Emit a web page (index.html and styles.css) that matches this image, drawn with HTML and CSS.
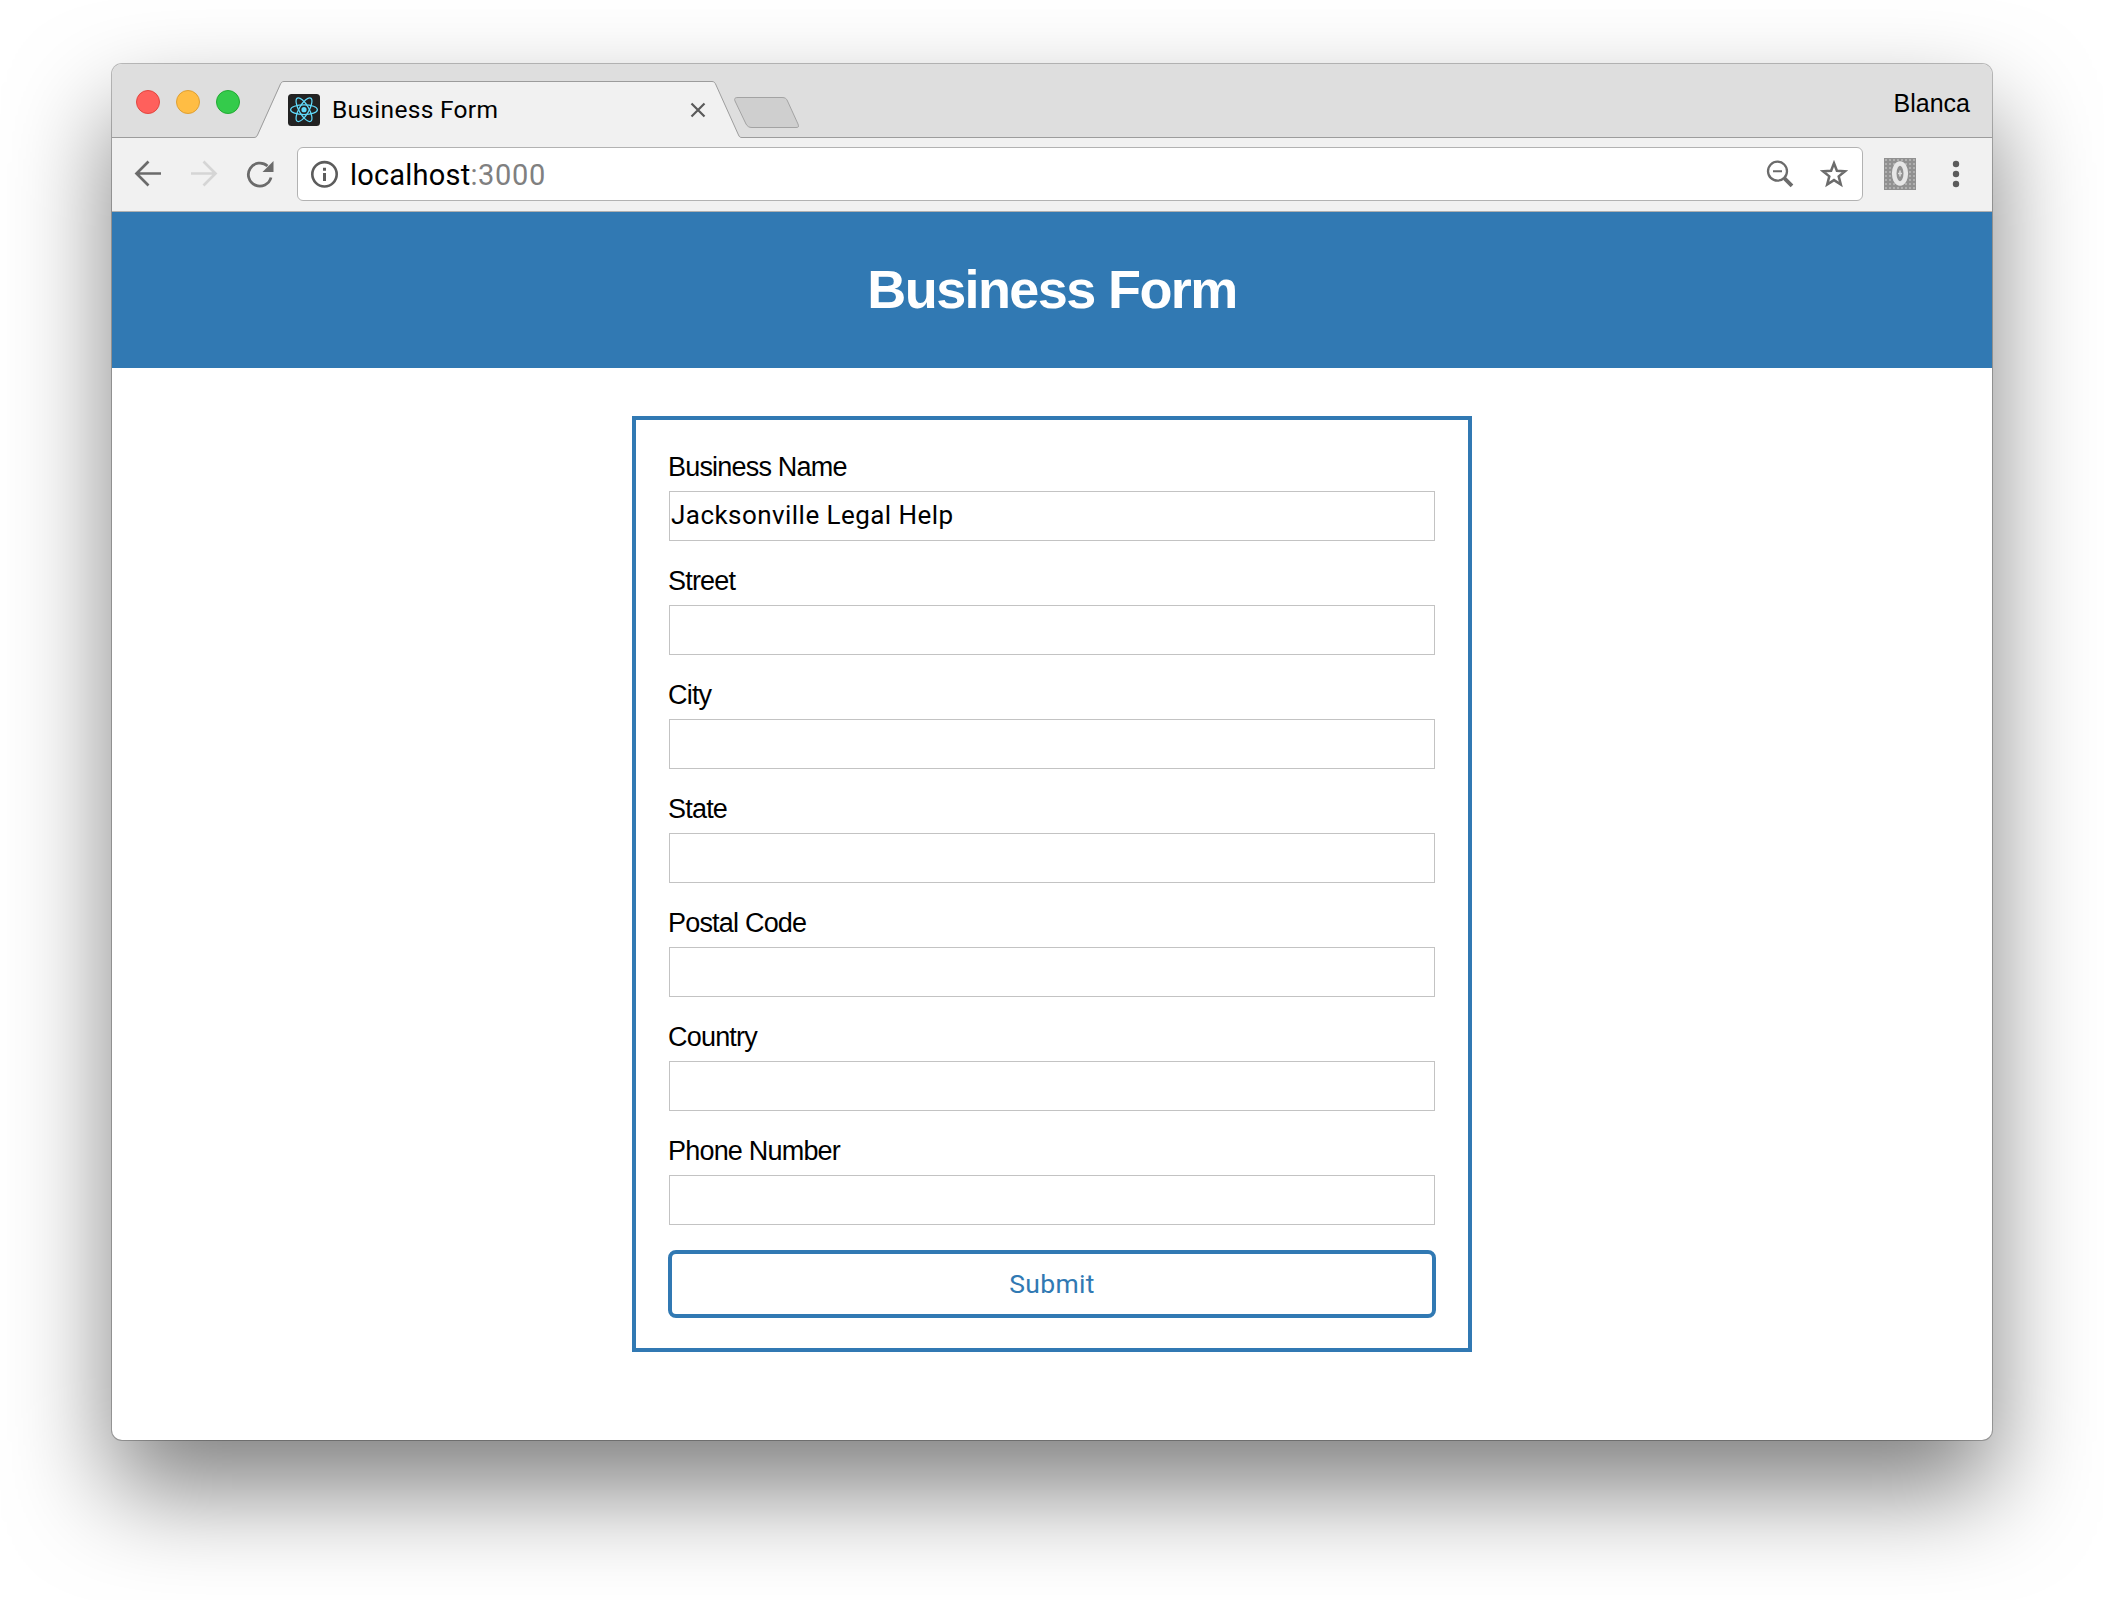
FILE: index.html
```html
<!DOCTYPE html>
<html lang="en">
<head>
<meta charset="utf-8">
<title>Business Form</title>
<link rel="stylesheet" href="styles.css">
</head>
<body>
<div class="window">
  <div class="tab-strip">
    <svg class="strip-shape" width="1880" height="74" viewBox="0 0 1880 74">
      <path d="M143 74C145 74 145 72.500 146 71L168.500 21C169.500 18.500 170 17.500 172 17.500H600C602 17.500 603 18.500 604 21L626.500 71C627 72.500 628 74 630 74Z" fill="#f1f1f1"/>
      <path d="M0 73.500H142C144 73.500 144.500 72.500 145.500 71L168 21C169 18.500 170 17.500 172 17.500H600C602 17.500 603 18.500 604 21L626.500 71C627.500 73 628 73.500 630 73.500H1880" fill="none" stroke="#9c9c9c"/>
      <path d="M626 33.500H670C673 33.500 674.500 34.500 675.500 37L686 60C687 63 686.500 63.500 684 63.500H640C637 63.500 635.500 62.500 634 60L623 37C622 34.500 623 33.500 626 33.500Z" fill="#cfcfcf" stroke="#a3a3a3"/>
    </svg>
    <div class="lights">
      <span class="light red"></span><span class="light amber"></span><span class="light green"></span>
    </div>
    <div class="tab">
      <svg width="32" height="32" viewBox="0 0 32 32">
        <rect width="32" height="32" rx="3.500" fill="#222"/>
        <g transform="translate(16 15.700)" fill="none" stroke="#61dafb" stroke-width="1.250">
          <ellipse rx="13.400" ry="4.900"/>
          <ellipse rx="13.400" ry="4.900" transform="rotate(60)"/>
          <ellipse rx="13.400" ry="4.900" transform="rotate(120)"/>
          <circle r="2.600" fill="#61dafb" stroke="none"/>
        </g>
      </svg>
      <span class="tab-title">Business Form</span>
      <svg class="tab-close" width="16" height="16" viewBox="0 0 16 16"><path d="M1.500 1.500L14.500 14.500M14.500 1.500L1.500 14.500" stroke="#5a5a5a" stroke-width="2.200"/></svg>
    </div>
    <span class="profile">Blanca</span>
  </div>
  <div class="toolbar">
    <svg class="nav" width="28" height="28" viewBox="0 0 28 28" fill="none" stroke="#6b6b6b" stroke-width="2.700"><path d="M27 13.500H3M14.500 1.500L2.500 13.500L14.500 25.500"/></svg>
    <svg class="nav" width="28" height="28" viewBox="0 0 28 28" fill="none" stroke="#d5d5d5" stroke-width="2.700"><path d="M1 13.500H25M13.500 1.500L25.500 13.500L13.500 25.500"/></svg>
    <svg class="nav" width="28" height="28" viewBox="0 0 28 28"><path d="M21.500 6A11.500 11.500 0 1 0 25 17.500" fill="none" stroke="#6b6b6b" stroke-width="2.800"/><path d="M27.500 1V12H16.500Z" fill="#6b6b6b"/></svg>
    <div class="omnibox">
      <svg width="28" height="28" viewBox="0 0 28 28"><circle cx="14.500" cy="14.300" r="12.200" fill="none" stroke="#5c5c5c" stroke-width="2.600"/><path d="M13 7.800H16V10.800H13ZM13 13.100H16V21H13Z" fill="#5c5c5c"/></svg>
      <span class="url">localhost<span class="port">:3000</span></span>
      <svg class="magnifier" width="28" height="28" viewBox="0 0 28 28" fill="none" stroke="#6b6b6b"><circle cx="11.500" cy="11.200" r="9.500" stroke-width="2.300"/><path d="M7 11.200H16" stroke-width="2"/><path d="M18.500 18.300L26 25.800" stroke-width="3.800"/></svg>
      <svg width="30" height="30" viewBox="0 0 30 30"><path d="M15 4.300L17.900 11.800L26 12.300L19.700 17.400L21.800 25.500L15 21.100L8.200 25.500L10.300 17.400L4 12.300L12.100 11.800Z" fill="none" stroke="#6b6b6b" stroke-width="2.500"/></svg>
    </div>
    <svg class="extension" width="32" height="32" viewBox="0 0 32 32">
      <defs><pattern id="weave" width="4" height="4" patternUnits="userSpaceOnUse"><rect width="4" height="4" fill="#919191"/><rect x="1" y="1" width="2" height="2" fill="#b0b0b0"/></pattern></defs>
      <rect width="32" height="32" fill="url(#weave)"/>
      <ellipse cx="16" cy="15.500" rx="5.800" ry="10" fill="#919191" stroke="#e6e6e6" stroke-width="4.600"/>
      <path d="M16 12.500V18.500M14 15.500H18" stroke="#dcdcdc" stroke-width="1.500"/>
    </svg>
    <svg width="8" height="28" viewBox="0 0 8 28" fill="#5c5c5c"><circle cx="4" cy="4" r="3.200"/><circle cx="4" cy="14" r="3.200"/><circle cx="4" cy="24" r="3.200"/></svg>
  </div>
  <header class="banner"><h1>Business Form</h1></header>
  <main class="page">
    <form class="form">
      <label class="field"><span>Business Name</span><input type="text" value="Jacksonville Legal Help"></label>
      <label class="field"><span>Street</span><input type="text"></label>
      <label class="field"><span>City</span><input type="text"></label>
      <label class="field"><span>State</span><input type="text"></label>
      <label class="field"><span>Postal Code</span><input type="text"></label>
      <label class="field"><span>Country</span><input type="text"></label>
      <label class="field"><span>Phone Number</span><input type="text"></label>
      <button class="submit" type="button">Submit</button>
    </form>
  </main>
</div>
</body>
</html>
```
FILE: styles.css
```css
* { box-sizing: border-box; }
body {
  margin: 0;
  height: 1600px;
  padding: 64px 112px 160px;
  overflow: hidden;
  background: #fff;
  font-family: "Liberation Sans", Arial, sans-serif;
  color: #000;
}
svg { display: block; flex: none; }
.window {
  height: 1376px;
  display: flex;
  flex-direction: column;
  border-radius: 10px;
  overflow: hidden;
  background: #fff;
  box-shadow: 0 0 0 1px rgba(0, 0, 0, .25), 0 50px 100px rgba(0, 0, 0, .5);
}
.tab-strip {
  position: relative;
  height: 74px;
  display: flex;
  align-items: flex-start;
  background: #dedede;
}
.strip-shape { position: absolute; left: 0; top: 0; }
.lights {
  position: relative;
  display: flex;
  gap: 16px;
  padding: 26px 0 0 24px;
}
.light { width: 24px; height: 24px; border-radius: 50%; border: 1px solid; }
.red { background: #ff605c; border-color: #e2463f; }
.amber { background: #ffbd44; border-color: #dfa033; }
.green { background: #34cb4b; border-color: #22ab33; }
.tab {
  position: relative;
  width: 418px;
  margin: 30px 0 0 48px;
  height: 32px;
  display: flex;
  align-items: center;
}
.tab-title {
  margin-left: 12px;
  font: 24.500px/32px Roboto, sans-serif;
  letter-spacing: .3px;
}
.tab-close { margin-left: auto; }
.profile {
  position: relative;
  margin: 24px 22px 0 auto;
  font-size: 25px;
  line-height: 30px;
}
.toolbar {
  height: 74px;
  display: flex;
  align-items: center;
  padding: 0 32px 2px 22px;
  background: #f1f1f1;
  border-bottom: 1px solid #b0b0b0;
}
.nav { margin-right: 28px; }
.nav:nth-child(3) { margin-right: 23px; }
.omnibox {
  width: 1566px;
  height: 54px;
  display: flex;
  align-items: center;
  padding: 0 13px 0 12px;
  background: #fff;
  border: 1px solid #b2b2b2;
  border-radius: 6px;
}
.url {
  margin-left: 12px;
  padding-top: 2px;
  font: 29px/36px Roboto, sans-serif;
  letter-spacing: .2px;
}
.port { color: #808080; letter-spacing: .7px; }
.magnifier { margin: 0 25px 0 auto; }
.extension { margin: 0 36px 0 21px; }
.banner {
  height: 156px;
  display: flex;
  justify-content: center;
  background: #3179b3;
}
h1 {
  margin: 45px 0 0;
  font-size: 54px;
  line-height: 64px;
  letter-spacing: -1.600px;
  color: #fff;
}
.page { display: flex; justify-content: center; padding-top: 48px; }
.form {
  width: 840px;
  height: 936px;
  padding: 32px 32px 30px;
  border: 4px solid #3179b3;
  background: #fff;
}
.field { display: flex; flex-direction: column; height: 114px; padding: 0 1px; }
.field span {
  height: 39px;
  margin-left: -1px;
  font-size: 27px;
  line-height: 30px;
  letter-spacing: -.800px;
}
.field input {
  width: 766px;
  height: 50px;
  padding: 0 1px 2px;
  border: 1px solid #c3c3c3;
  border-radius: 0;
  font: 26px Roboto, sans-serif;
  letter-spacing: .45px;
  color: #000;
}
.submit {
  width: 768px;
  height: 68px;
  padding: 0 0 2px;
  border: 4px solid #3179b3;
  border-radius: 8px;
  background: #fff;
  color: #3179b3;
  font: 26.500px Roboto, sans-serif;
  letter-spacing: .3px;
}
```
